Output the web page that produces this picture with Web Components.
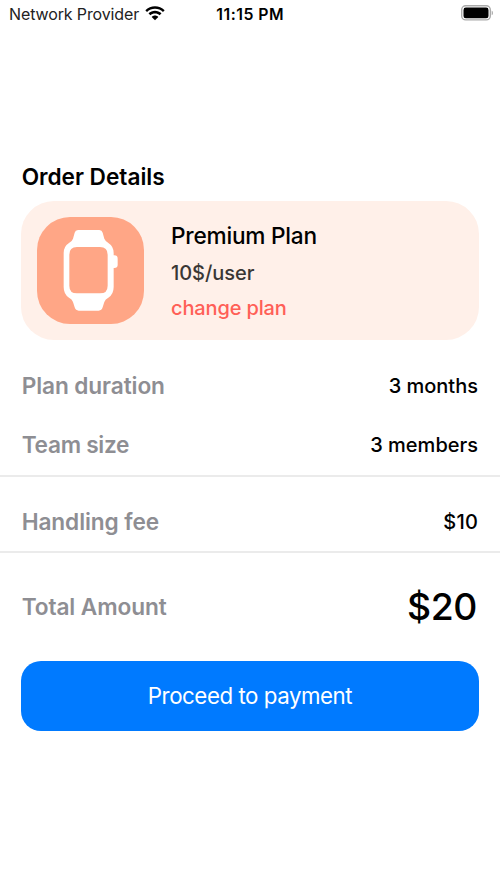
<!DOCTYPE html>
<html lang="en">
<head>
<meta charset="utf-8">
<title>Order Details</title>
<style>
  html, body { margin: 0; background: #fff; }
  body { font-family: Inter, "Liberation Sans", sans-serif; color: #000; width: 500px; height: 889px; overflow: hidden; }
</style>
</head>
<body>
<order-screen></order-screen>
<script>
  const define = (name, html) => customElements.define(name, class extends HTMLElement {
    constructor() {
      super();
      this.attachShadow({ mode: 'open' }).innerHTML = html;
    }
  });

  define('status-bar', `
    <style>
      :host { display: grid; grid-template-columns: 1fr auto 1fr; align-items: center; height: 27px; padding: 0 7.500px 0 9px; font-size: 16px; line-height: 20px; white-space: nowrap; }
      .left { display: flex; align-items: center; gap: 5.500px; color: #222; }
      .left svg { fill: #000; }
      .carrier { letter-spacing: -.12px; }
      .time { font-weight: 600; font-size: 15.800px; letter-spacing: .5px; margin-right: 1px; padding-top: 2px; }
      .battery { justify-self: end; margin-top: -1px; }
      svg { display: block; }
    </style>
    <div class="left"><span class="carrier"><slot name="carrier"></slot></span>
      <svg width="20" height="15" viewBox="0 0 60 45">
        <path d="M30 1C41 1 51 5.500 59 13L54 18C47.500 12 39 8.500 30 8.500S12.500 12 6 18L1 13C9 5.500 19 1 30 1Z"/>
        <path d="M30 14.500C37.500 14.500 44 17.500 49.500 22L44 28C40 24.500 35.500 22.500 30 22.500S20 24.500 16 28L10.500 22C16 17.500 22.500 14.500 30 14.500Z"/>
        <path d="M30 28.500C34 28.500 37.500 30 40 33L30 43L20 33C22.500 30 26 28.500 30 28.500Z"/>
      </svg>
    </div>
    <span class="time"><slot name="time"></slot></span>
    <svg class="battery" width="32" height="16" viewBox="0 0 32 16">
      <rect x=".7" y=".7" width="28.600" height="14.200" rx="4" fill="none" stroke="#aaa" stroke-width="1.400"/>
      <rect x="2.500" y="2.600" width="25" height="10.600" rx="2.300"/>
      <path d="M30.700 5.500Q32 6.300 32 7.900T30.700 10.300Z" fill="#aaa"/>
    </svg>`);

  define('watch-tile', `
    <style>
      :host { display: block; width: 106.670px; height: 106.670px; border-radius: 33px; background: #ffa686; }
      svg { display: block; width: 100%; height: 100%; }
    </style>
    <svg viewBox="22 22 320 320">
      <path fill="#fff" fill-rule="evenodd" d="M145 61H209Q217 61 219 69L224 87Q228 96 237 101Q252 111 252 130V137H254Q264 137 264 147V166Q264 175 254 175H252V232Q252 254 236 264Q227 268 224 277L219 293Q216 303 207 303H147Q138 303 135 293L130 277Q127 268 118 264Q102 254 102 232V130Q102 111 117 101Q127 96 130 87L135 69Q137 61 145 61ZM142 112Q119 112 119 135V228Q119 251 142 251H211Q234 251 234 228V135Q234 112 211 112Z"/>
    </svg>`);

  define('plan-card', `
    <style>
      :host { display: flex; align-items: center; gap: 27px; box-sizing: border-box; height: 139.330px; padding: 0 16px; border-radius: 33px; background: #fff0e9; font-weight: 500; }
      .info { display: flex; flex-direction: column; padding-top: 2px; white-space: nowrap; }
      .name { font-size: 22.670px; line-height: 36px; padding-bottom: 2px; letter-spacing: -.22px; }
      .price { font-size: 20px; line-height: 35px; color: #3a3735; letter-spacing: -.06px; }
      .link { font-size: 20px; line-height: 35px; color: #ff5f57; letter-spacing: -.14px; }
    </style>
    <watch-tile></watch-tile>
    <div class="info">
      <span class="name"><slot name="name"></slot></span>
      <span class="price"><slot name="price"></slot></span>
      <span class="link"><slot name="link"></slot></span>
    </div>`);

  define('detail-row', `
    <style>
      :host { display: flex; align-items: center; justify-content: space-between; box-sizing: border-box; padding: 0 22px 0 21.670px; white-space: nowrap; }
      .label { font-size: 22.670px; line-height: 28px; font-weight: 600; color: #8e8e93; letter-spacing: var(--label-ls, -.1px); }
      .value { font-size: var(--value-size, 20px); line-height: 1.2; font-weight: 500; letter-spacing: var(--value-ls, 0); }
    </style>
    <span class="label"><slot></slot></span><span class="value"><slot name="value"></slot></span>`);

  define('pay-button', `
    <style>
      :host { display: block; }
      button { display: flex; align-items: center; justify-content: center; width: 100%; height: 70px; padding: 0; border: 0; border-radius: 20px; background: #007aff; color: #fff; font: 400 22.300px/28px Inter, "Liberation Sans", sans-serif; letter-spacing: -.46px; }
    </style>
    <button type="button"><slot></slot></button>`);

  define('order-screen', `
    <style>
      :host { display: block; }
      h1 { margin: 136px 21.670px 10px; font-size: 22.670px; line-height: 28px; font-weight: 600; white-space: nowrap; letter-spacing: -.03px; }
      plan-card { margin: 0 21.330px; }
      .rule { height: 2px; background: #ebebeb; }
      pay-button { margin: 0 21.330px; }
      .first { height: 59.500px; margin-top: 15.700px; }
      .team { height: 59.500px; padding-bottom: .500px; --label-ls: -.28px; }
      .fee { height: 74px; padding-top: 16px; --value-ls: .2px; }
      .total { height: 108px; --value-size: 37.330px; --value-ls: -.4px; padding-right: 23px; }
    </style>
    <status-bar><span slot="carrier">Network Provider</span><span slot="time">11:15 PM</span></status-bar>
    <h1>Order Details</h1>
    <plan-card><span slot="name">Premium Plan</span><span slot="price">10$/user</span><span slot="link">change plan</span></plan-card>
    <detail-row class="first"><span>Plan duration</span><span slot="value">3 months</span></detail-row>
    <detail-row class="team"><span>Team size</span><span slot="value">3 members</span></detail-row>
    <div class="rule"></div>
    <detail-row class="fee"><span>Handling fee</span><span slot="value">$10</span></detail-row>
    <div class="rule"></div>
    <detail-row class="total"><span>Total Amount</span><span slot="value">$20</span></detail-row>
    <pay-button>Proceed to payment</pay-button>`);
</script>
</body>
</html>
